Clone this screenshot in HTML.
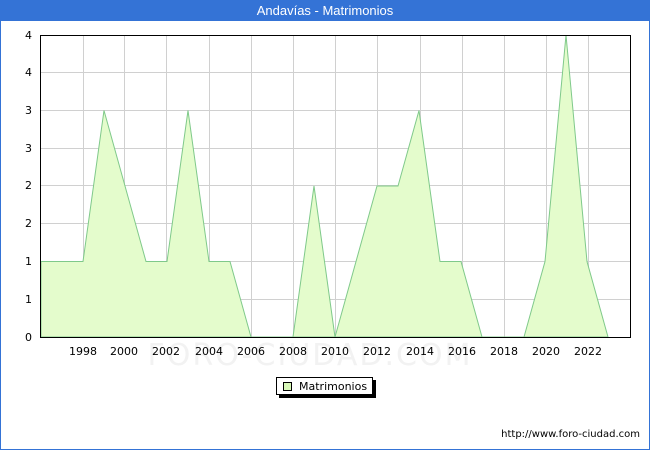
<!DOCTYPE html>
<html><head><style>
body{margin:0;width:650px;height:450px;background:#fff;font-family:"Liberation Sans","DejaVu Sans",sans-serif;overflow:hidden}
.frame{position:absolute;left:0;top:0;width:648px;height:448px;border:1px solid #3473d6}
.title{position:absolute;left:0;top:0;width:650px;height:21px;background:#3473d6;color:#fff;font-size:13px;text-align:center;line-height:22px}
</style></head><body>
<div class="frame"></div>
<div class="title">Andavías - Matrimonios</div>
<svg width="650" height="450" style="position:absolute;left:0;top:0" font-family="DejaVu Sans, Liberation Sans, sans-serif" font-size="11">
<g stroke="#d0d0d0" stroke-width="1">
<line x1="83.5" y1="35" x2="83.5" y2="337"/><line x1="124.5" y1="35" x2="124.5" y2="337"/><line x1="166.5" y1="35" x2="166.5" y2="337"/><line x1="209.5" y1="35" x2="209.5" y2="337"/><line x1="251.5" y1="35" x2="251.5" y2="337"/><line x1="293.5" y1="35" x2="293.5" y2="337"/><line x1="335.5" y1="35" x2="335.5" y2="337"/><line x1="377.5" y1="35" x2="377.5" y2="337"/><line x1="420.5" y1="35" x2="420.5" y2="337"/><line x1="462.5" y1="35" x2="462.5" y2="337"/><line x1="504.5" y1="35" x2="504.5" y2="337"/><line x1="546.5" y1="35" x2="546.5" y2="337"/><line x1="588.5" y1="35" x2="588.5" y2="337"/>
<line x1="40" y1="72.5" x2="630" y2="72.5"/><line x1="40" y1="110.5" x2="630" y2="110.5"/><line x1="40" y1="148.5" x2="630" y2="148.5"/><line x1="40" y1="185.5" x2="630" y2="185.5"/><line x1="40" y1="223.5" x2="630" y2="223.5"/><line x1="40" y1="261.5" x2="630" y2="261.5"/><line x1="40" y1="299.5" x2="630" y2="299.5"/>
</g>
<polygon fill="#e4fccc" stroke="#7fc98a" stroke-width="1" points="41,337 41,261.5 62,261.5 83,261.5 104,110.5 125,186 146,261.5 167,261.5 188,110.5 209,261.5 230,261.5 251,337 272,337 293,337 314,186 335,337 356,261.5 377,186 398,186 419,110.5 440,261.5 461,261.5 482,337 503,337 524,337 545,261.5 566,35 587,261.5 608,337"/>
<rect x="40.5" y="35.5" width="590" height="302" fill="none" stroke="#000"/>
<text x="310" y="365" font-size="30" fill="#f2f2f2" text-anchor="middle" letter-spacing="2">FORO-CIUDAD.COM</text>
<g text-anchor="end" fill="#000">
<text x="32" y="341">0</text><text x="32" y="303">1</text><text x="32" y="265">1</text><text x="32" y="227">2</text><text x="32" y="189">2</text><text x="32" y="152">3</text><text x="32" y="114">3</text><text x="32" y="76">4</text><text x="32" y="39">4</text>
</g>
<g text-anchor="middle" fill="#000">
<text x="83" y="355">1998</text><text x="124" y="355">2000</text><text x="166" y="355">2002</text><text x="209" y="355">2004</text><text x="251" y="355">2006</text><text x="293" y="355">2008</text><text x="335" y="355">2010</text><text x="377" y="355">2012</text><text x="420" y="355">2014</text><text x="462" y="355">2016</text><text x="504" y="355">2018</text><text x="546" y="355">2020</text><text x="588" y="355">2022</text>
</g>
<rect x="279" y="380" width="97" height="18" fill="#000"/>
<rect x="276.5" y="377.5" width="96" height="17" fill="#fff" stroke="#000"/>
<rect x="283.5" y="382.5" width="8" height="8" fill="#d8f8b8" stroke="#000"/>
<text x="299" y="390" font-size="11">Matrimonios</text>
<text x="640" y="437" font-size="10" text-anchor="end">http://www.foro-ciudad.com</text>
</svg>
</body></html>
